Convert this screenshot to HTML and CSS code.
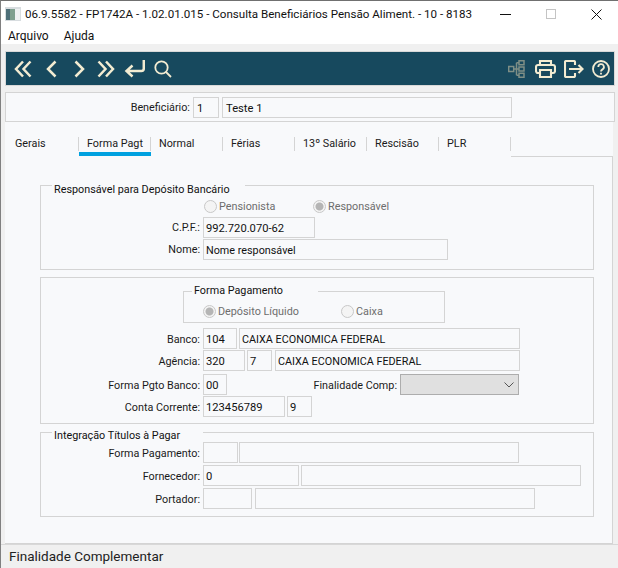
FILE: index.html
```html
<!DOCTYPE html>
<html lang="pt">
<head>
<meta charset="utf-8">
<title>Consulta Beneficiários Pensão Aliment.</title>
<link rel="stylesheet" href="styles.css">
</head>
<body>
<div class="window">
  <header class="titlebar">
    <svg class="app-icon" width="16" height="16" viewBox="0 0 16 16"><rect x="0" y="1" width="16" height="14" fill="#d8dde0"/><rect x="1" y="3" width="4" height="11" fill="#4d6f78"/><rect x="5" y="3" width="5" height="11" fill="#7fa08f"/><rect x="10" y="3" width="5" height="11" fill="#eef1f2"/></svg>
    <span class="title">06.9.5582 - FP1742A - 1.02.01.015 - Consulta Beneficiários Pensão Aliment. - 10 - 8183</span>
    <span class="winbtns">
      <svg width="11" height="11" viewBox="0 0 11 11"><path d="M0 5.500H11" stroke="#111" fill="none"/></svg>
      <svg width="10" height="10" viewBox="0 0 10 10"><rect x=".5" y=".5" width="9" height="9" stroke="#c4c4c4" fill="none"/></svg>
      <svg width="11" height="11" viewBox="0 0 11 11"><path d="M.5.5l10 10M10.500.5l-10 10" stroke="#111" fill="none"/></svg>
    </span>
  </header>
  <nav class="menubar"><span>Arquivo</span><span>Ajuda</span></nav>
  <div class="content">
    <div class="toolbar">
      <svg class="ic m8" width="18" height="18" viewBox="0 0 18 18"><path d="M9 1.500L2 9l7 7.500M16.500 1.500L9.500 9l7 7.500"/></svg>
      <svg class="ic m14" width="11" height="18" viewBox="0 0 11 18"><path d="M9.500 1.500L2 9l7.500 7.500"/></svg>
      <svg class="ic m17" width="11" height="18" viewBox="0 0 11 18"><path d="M1.500 1.500L9 9l-7.500 7.500"/></svg>
      <svg class="ic m12" width="18" height="18" viewBox="0 0 18 18"><path d="M1.500 1.500L8.500 9l-7 7.500M9 1.500L16 9l-7 7.500"/></svg>
      <svg class="ic m9" width="21" height="18" viewBox="0 0 21 18"><path d="M19.800 0v8.500a2.500 2.500 0 0 1-2.500 2.500H3M8.500 5.500L2.500 11l6 5.500"/></svg>
      <svg class="ic m9 thin" width="18" height="18" viewBox="0 0 18 18"><circle cx="7.500" cy="7.500" r="6.200"/><path d="M12 12l5 5"/></svg>
      <span class="spacer"></span>
      <svg class="ic dim" width="17" height="18" viewBox="0 0 17 18"><path d="M.7 6.500h5v5h-5zM11 .7h5v4h-5zM11 7h5v4h-5zM11 13.300h5v4h-5zM5.700 9H11M8.500 2.700v12.600M8.500 2.700H11M8.500 15.300H11"/></svg>
      <svg class="ic m10 mid" width="21" height="18" viewBox="0 0 21 18"><path d="M5 5V1h11v4M5 13H3a2 2 0 0 1-2-2V7a2 2 0 0 1 2-2h15a2 2 0 0 1 2 2v4a2 2 0 0 1-2 2h-2M5 10h11v7H5z"/></svg>
      <svg class="ic m8 mid" width="20" height="18" viewBox="0 0 20 18"><path d="M11 5V2a1 1 0 0 0-1-1H2a1 1 0 0 0-1 1v14a1 1 0 0 0 1 1h8a1 1 0 0 0 1-1v-3M5 9h13.500M14.500 5l4 4-4 4"/></svg>
      <svg class="ic m8 thin" width="18" height="18" viewBox="0 0 18 18"><circle cx="9" cy="9" r="8"/><path d="M6.300 7a2.800 2.800 0 1 1 4.200 2.400c-1 .6-1.500 1-1.500 2.200M9 12.800v1.800"/></svg>
    </div>
    <section class="benef">
      <span class="lbl benef-lab">Beneficiário:</span>
      <span class="fld w26">1</span>
      <span class="fld w290">Teste 1</span>
    </section>
    <div class="tabs">
      <span class="tab">Gerais</span>
      <span class="tab active">Forma Pagt</span>
      <span class="tab">Normal</span>
      <span class="tab">Férias</span>
      <span class="tab">13º Salário</span>
      <span class="tab">Rescisão</span>
      <span class="tab">PLR</span>
      <span class="tabfill"></span>
    </div>
    <main class="tabbody">
      <section class="group g1">
        <span class="legend l1">Responsável para Depósito Bancário</span>
        <div class="row radios">
          <span class="radio w109"><i></i>Pensionista</span>
          <span class="radio"><i class="on"></i>Responsável</span>
        </div>
        <div class="row"><span class="lbl lab">C.P.F.:</span><span class="fld num w112">992.720.070-62</span></div>
        <div class="row"><span class="lbl lab">Nome:</span><span class="fld w245">Nome responsável</span></div>
      </section>
      <section class="group g2">
        <div class="inner">
          <span class="legend l2">Forma Pagamento</span>
          <span class="radio w138"><i class="on"></i>Depósito Líquido</span>
          <span class="radio"><i></i>Caixa</span>
        </div>
        <div class="row mt5"><span class="lbl lab">Banco:</span><span class="fld num w34">104</span><span class="fld w281">CAIXA ECONOMICA FEDERAL</span></div>
        <div class="row mt1"><span class="lbl lab">Agência:</span><span class="fld num w42">320</span><span class="fld num w25">7</span><span class="fld w245 ml1">CAIXA ECONOMICA FEDERAL</span></div>
        <div class="row mt3">
          <span class="lbl lab">Forma Pgto Banco:</span><span class="fld num w24">00</span>
          <span class="lbl lab2">Finalidade Comp:</span>
          <span class="select"><svg width="10" height="6" viewBox="0 0 10 6"><path d="M.5.5L5 5 9.500.5" fill="none" stroke="#555"/></svg></span>
        </div>
        <div class="row"><span class="lbl lab">Conta Corrente:</span><span class="fld num w82">123456789</span><span class="fld num w25">9</span></div>
      </section>
      <section class="group g3">
        <span class="legend l3">Integração Títulos à Pagar</span>
        <div class="row"><span class="lbl lab">Forma Pagamento:</span><span class="fld w35"></span><span class="fld w280 ml-1"></span></div>
        <div class="row mt2"><span class="lbl lab">Fornecedor:</span><span class="fld num w96">0</span><span class="fld w280"></span></div>
        <div class="row mt2"><span class="lbl lab">Portador:</span><span class="fld w49"></span><span class="fld w280 ml1"></span></div>
      </section>
    </main>
  </div>
  <footer class="status">Finalidade Complementar</footer>
</div>
</body>
</html>
```
FILE: styles.css
```css
* { box-sizing: border-box; }
html, body { margin: 0; height: 100%; }
body { width: 618px; height: 568px; overflow: hidden; font-family: Roboto, "Liberation Sans", sans-serif; font-size: 10.800px; color: #1a1a1a; }
.window { width: 618px; height: 568px; display: flex; flex-direction: column; background: #f0f0f0; border-top: 1px solid #707070; border-left: 1px solid #808080; }
.titlebar { height: 26px; background: #fff; display: flex; align-items: center; padding-left: 4px; flex: none; }
.app-icon { flex: none; }
.title { margin-left: 4px; font-size: 11.600px; color: #111; white-space: nowrap; }
.winbtns { margin-left: auto; display: flex; align-items: center; gap: 35px; padding-right: 16px; }
.menubar { height: 17px; background: #fff; display: flex; gap: 15px; padding: 2px 0 0 7px; font-size: 12px; line-height: 15px; flex: none; color: #111; }
.content { flex: 1; padding: 7px 3px 0 4px; display: flex; flex-direction: column; min-height: 0; }
.toolbar { height: 35px; background: #17495e; border: 1px solid #d8d8d8; display: flex; align-items: center; padding: 0 4px 0 0; flex: none; }
.spacer { flex: 1; }
.ic { flex: none; fill: none; stroke: #f3ecd2; stroke-width: 2.500; }
.ic.dim { stroke: #7f8f86; stroke-width: 1.500; }
.ic.thin { stroke-width: 1.800; }
.ic.mid { stroke-width: 2.100; }
.m8 { margin-left: 8px; } .m9 { margin-left: 9px; } .m10 { margin-left: 10px; } .m12 { margin-left: 12px; } .m14 { margin-left: 14px; } .m17 { margin-left: 17px; }
.benef { height: 30px; margin-top: 6px; background: #f8f9fb; border: 1px solid #d4d4d4; display: flex; align-items: center; gap: 3px; flex: none; }
.benef-lab { width: 184px; flex: none; }
.tabs { height: 35px; background: #f8f9fb; display: flex; align-items: flex-end; flex: none; margin-right: 2px; }
.tab { position: relative; width: 72px; height: 14px; padding-left: 8px; line-height: 13px; border-right: 1px solid #d4d4d4; margin-bottom: 6px; white-space: nowrap; flex: none; }
.tab:first-child { width: 74px; padding-left: 10px; }
.tab.active::after { content: ""; position: absolute; left: 0; right: -1px; top: 15px; height: 4px; background: #00a1e0; }
.tabfill { flex: 1; border-bottom: 1px solid #d4d4d4; height: 1px; }
.tabbody { flex: 1; background: #f8f9fb; border: solid #d4d4d4; border-width: 0 1px 1px 0; margin-right: 2px; padding: 28px 18px 0 35px; min-height: 0; }
.group { position: relative; border: 1px solid #d4d4d4; width: 554px; }
.g1 { height: 85px; padding-top: 31px; }
.g2 { height: 147px; margin-top: 7px; padding-top: 13px; }
.g3 { height: 85px; margin-top: 8px; padding-top: 9px; }
.g2 .lbl, .g3 .lbl { padding-top: 1px; }
.legend { position: absolute; background: #f8f9fb; white-space: nowrap; padding: 0 0 0 2px; line-height: 15px; color: #111; }
.l1 { left: 11px; top: -4px; width: 193px; }
.l2 { left: 8px; top: -9px; width: 126px; }
.l3 { left: 11px; top: -5px; width: 151px; }
.row { display: flex; align-items: center; margin-bottom: 1px; }
.radios { position: absolute; top: 14px; left: 163px; margin: 0; }
.radio { display: inline-flex; align-items: center; color: #6d6d6d; white-space: nowrap; }
.radio i { width: 13px; height: 13px; border: 1px solid #c8c8c8; border-radius: 50%; background: #f4f4f4; margin-right: 2px; flex: none; display: block; }
.radio i.on { background: radial-gradient(circle, #b5b5b5 0 3.500px, #f4f4f4 4.500px); }
.w109 { width: 109px; }
.w138 { width: 138px; }
.inner { position: relative; margin-left: 142px; width: 262px; height: 32px; border: 1px solid #d4d4d4; padding: 13px 0 0 19px; display: flex; align-items: flex-start; }
.lbl { text-align: right; white-space: nowrap; }
.lab { width: 159px; margin-right: 3px; flex: none; }
.lab2 { width: 168px; margin-right: 3px; flex: none; }
.fld { height: 21px; border: 1px solid #d4d4d4; margin-right: 2px; padding-left: 2px; line-height: 21px; white-space: nowrap; flex: none; color: #111; background: #f8f9fb; }
.fld.num { font-size: 11.200px; }
.benef .fld { padding-left: 3px; margin-right: 0; font-size: 11.200px; }
.w24 { width: 24px; } .w25 { width: 25px; } .w26 { width: 26px; }
.w34 { width: 34px; } .w35 { width: 35px; } .w42 { width: 42px; } .w49 { width: 49px; }
.w82 { width: 82px; } .w96 { width: 96px; } .w112 { width: 112px; }
.w245 { width: 245px; } .w280 { width: 280px; } .w281 { width: 281px; } .w290 { width: 290px; }
.ml1 { margin-left: 1px; } .ml-1 { margin-left: -1px; }
.mt1 { margin-top: 1px; } .mt2 { margin-top: 2px; } .mt3 { margin-top: 3px; } .mt5 { margin-top: 5px; }
.select { width: 119px; height: 21px; background: #e0e0e0; border: 1px solid #adadad; display: flex; align-items: center; justify-content: flex-end; padding-right: 4px; flex: none; }
.status { height: 24px; background: #f0f0f0; border-top: 1px solid #d8d8d8; padding-left: 8px; font-size: 13.500px; line-height: 23px; flex: none; color: #222; }
```
